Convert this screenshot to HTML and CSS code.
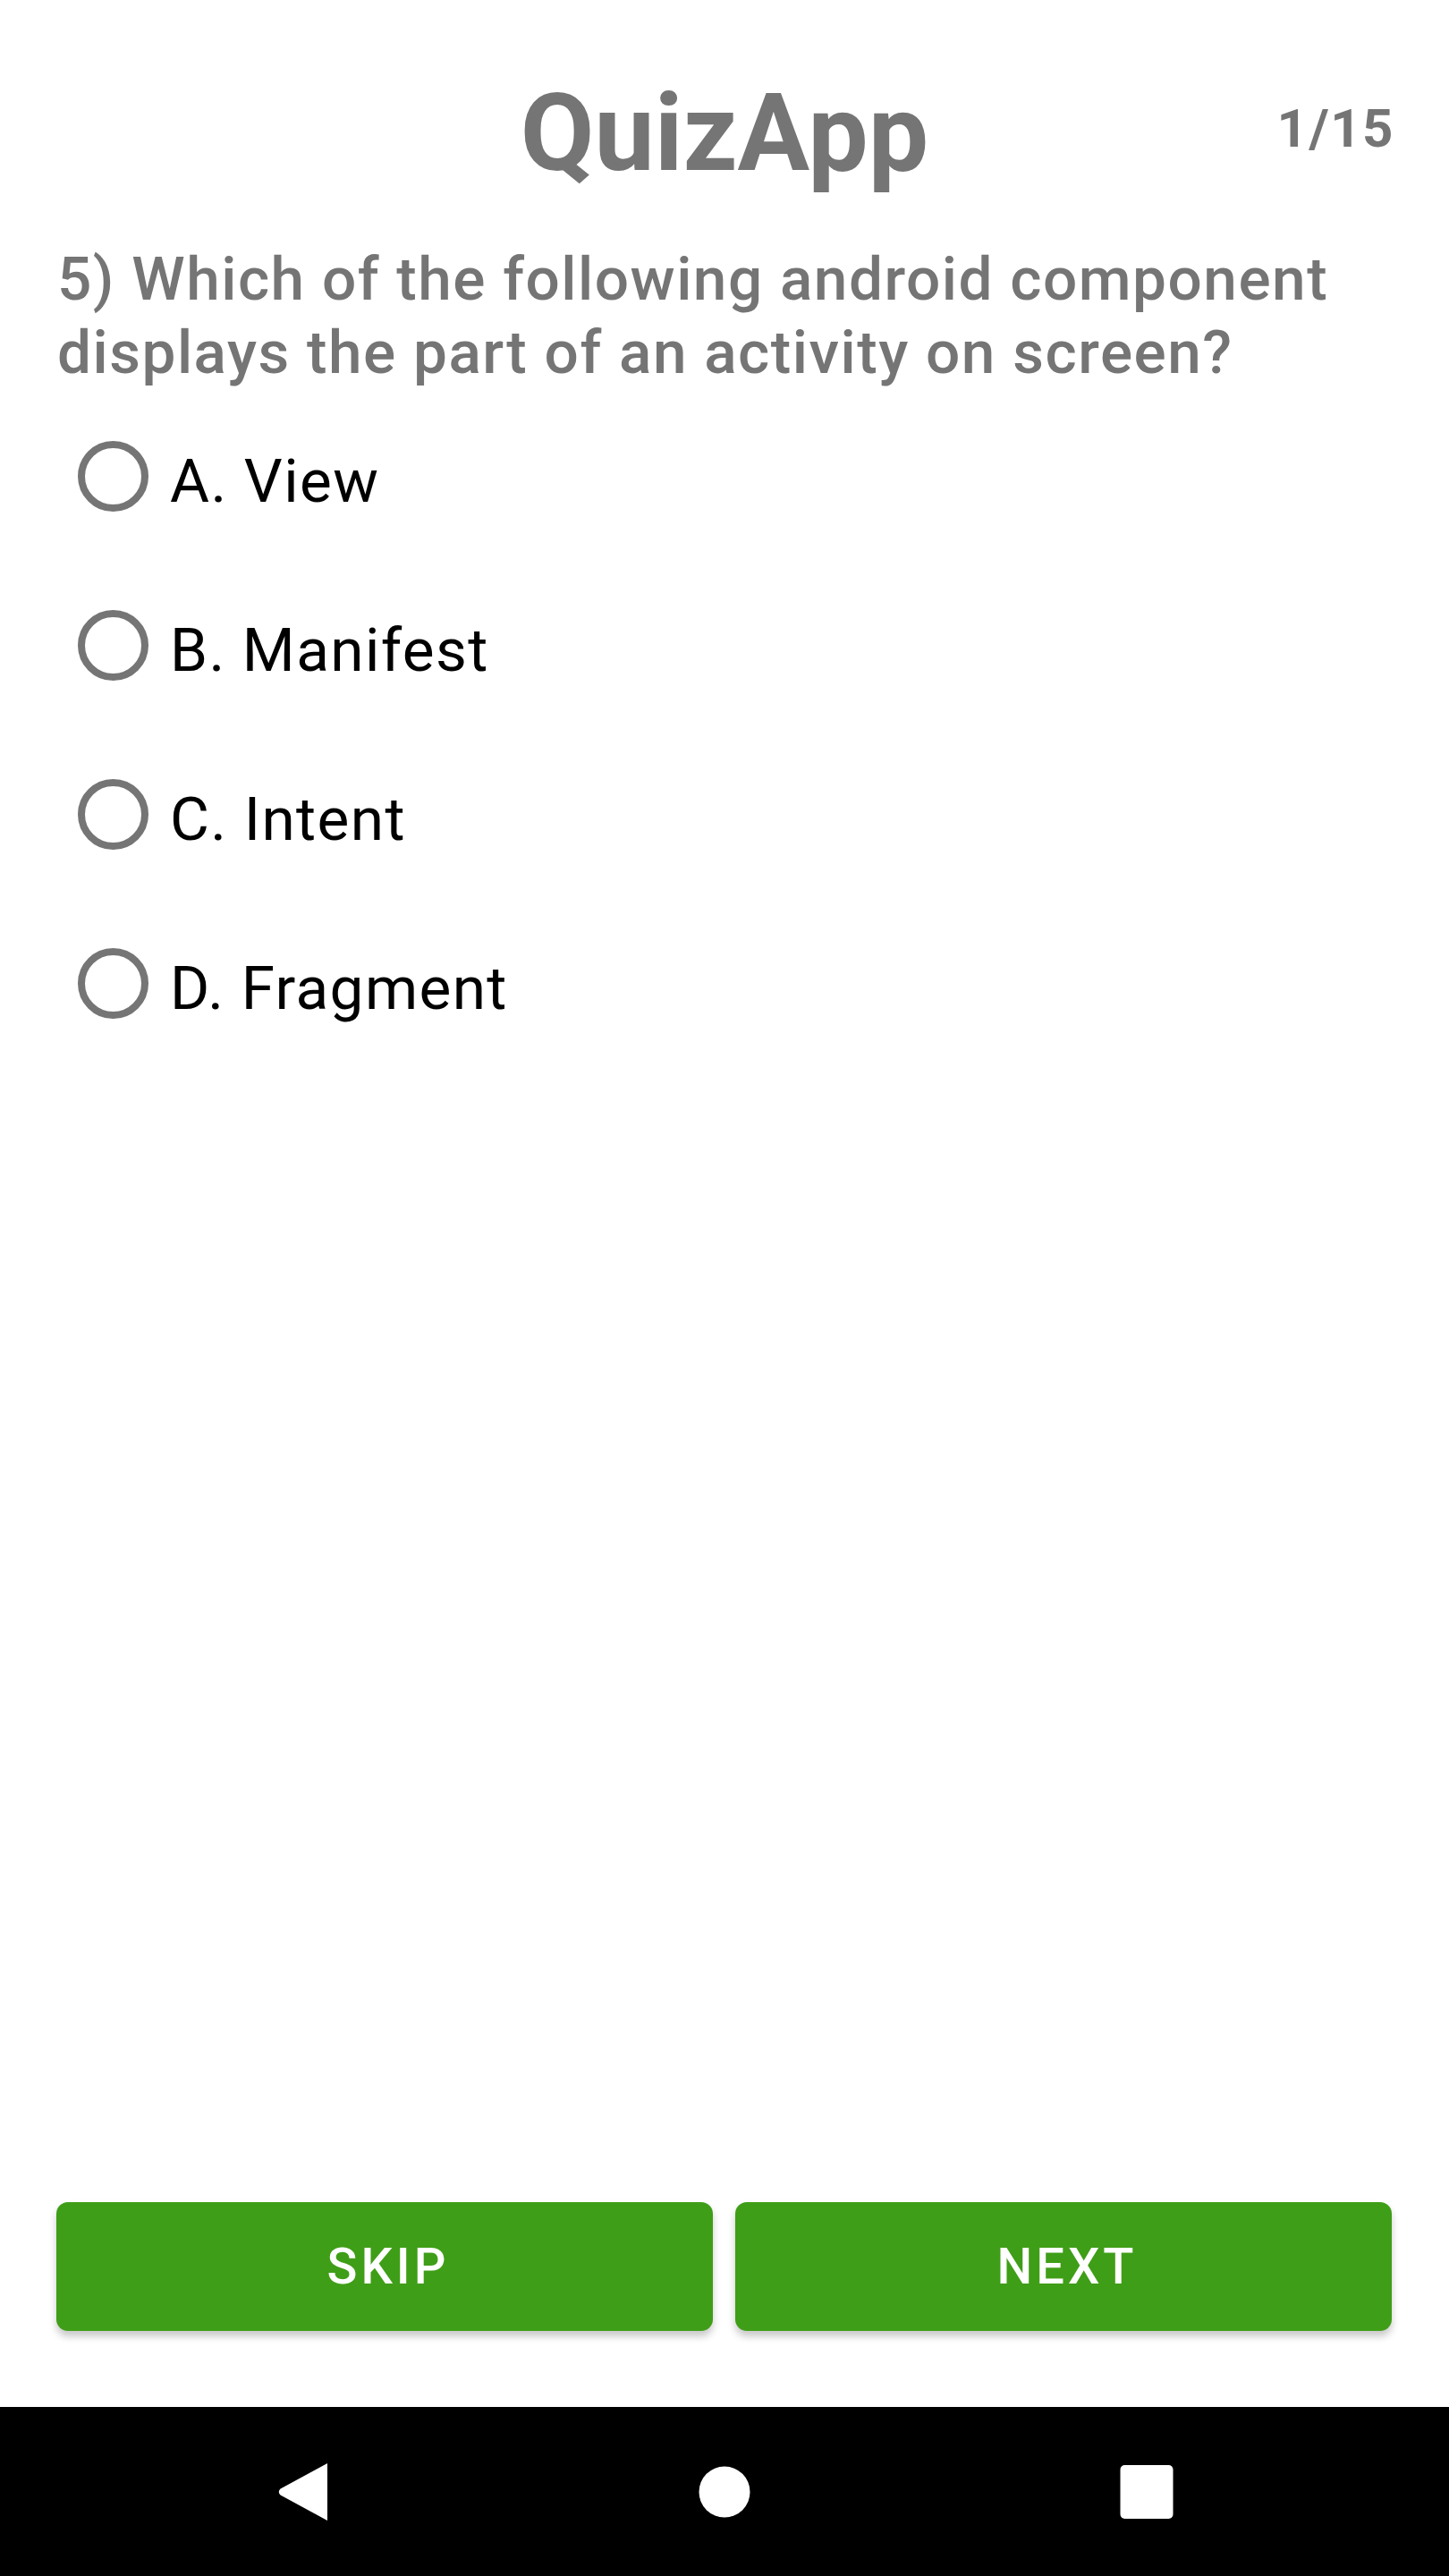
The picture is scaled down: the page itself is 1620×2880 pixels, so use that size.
FILE: index.html
```html
<!DOCTYPE html>
<html lang="en">
<head>
<meta charset="utf-8">
<title>QuizApp</title>
<link rel="stylesheet" href="styles.css">
</head>
<body>
<div class="screen">
  <main class="content">
    <header class="header">
      <span class="header-spacer"></span>
      <h1 class="title">QuizApp</h1>
      <span class="counter">1/15</span>
    </header>
    <p class="question">5) Which of the following android component displays the part of an activity on screen?</p>
    <div class="options">
      <label class="option"><span class="radio"></span><span class="option-text">A. View</span></label>
      <label class="option"><span class="radio"></span><span class="option-text">B. Manifest</span></label>
      <label class="option"><span class="radio"></span><span class="option-text">C. Intent</span></label>
      <label class="option"><span class="radio"></span><span class="option-text">D. Fragment</span></label>
    </div>
  </main>
  <footer class="actions">
    <button class="btn">SKIP</button>
    <button class="btn">NEXT</button>
  </footer>
  <nav class="navbar">
    <span class="nav-cell">
      <svg class="nav-back" width="56" height="64" viewBox="0 0 56 64"><path d="M56 0 L56 64 L3.5 35.5 Q0 32 3.5 28.5 Z" fill="#fff"/></svg>
    </span>
    <span class="nav-cell">
      <svg width="58" height="58" viewBox="0 0 58 58"><circle cx="29" cy="29" r="28.5" fill="#fff"/></svg>
    </span>
    <span class="nav-cell">
      <svg width="60" height="60" viewBox="0 0 60 60"><rect x="0.5" y="0" width="59" height="60" rx="5" fill="#fff"/></svg>
    </span>
  </nav>
</div>
</body>
</html>
```

FILE: styles.css
```css
* {
  box-sizing: border-box;
}

html, body {
  margin: 0;
  padding: 0;
  background: #ffffff;
}

body {
  font-family: Roboto, "Noto Sans", "Liberation Sans", sans-serif;
}

.screen {
  width: 1620px;
  height: 2880px;
  display: flex;
  flex-direction: column;
  background: #ffffff;
}

.content {
  flex: 1;
  padding: 79px 64px 0 64px;
}

.header {
  display: grid;
  grid-template-columns: 1fr auto 1fr;
  align-items: start;
}

.title {
  margin: 0;
  font-size: 120px;
  font-weight: 700;
  line-height: 141px;
  color: #757575;
  text-align: center;
}

.counter {
  justify-self: end;
  margin-top: 30px;
  margin-right: -3px;
  font-size: 60px;
  font-weight: 700;
  letter-spacing: 1.5px;
  line-height: 70px;
  color: #757575;
}

.question {
  margin: 51px 0 0 0;
  font-size: 67.5px;
  font-weight: 500;
  letter-spacing: 1.5px;
  line-height: 82px;
  color: #757575;
}

.options {
  margin-top: 3px;
  display: flex;
  flex-direction: column;
}

.option {
  height: 189px;
  display: flex;
  align-items: center;
  padding-left: 23px;
}

.radio {
  width: 79px;
  height: 79px;
  border: 8px solid #757575;
  border-radius: 50%;
  flex: none;
}

.option-text {
  margin-left: 24px;
  padding-top: 10px;
  font-size: 67.5px;
  font-weight: 400;
  letter-spacing: 1.4px;
  line-height: 79px;
  color: #000000;
}

.actions {
  display: flex;
  gap: 25px;
  padding: 0 64px 85px 63px;
}

.btn {
  flex: 1;
  height: 144px;
  border: none;
  border-radius: 13px;
  background: #3f9e17;
  color: #ffffff;
  font-family: Roboto, "Noto Sans", "Liberation Sans", sans-serif;
  font-size: 56px;
  font-weight: 500;
  letter-spacing: 4px;
  box-shadow: 0 6px 9px rgba(0, 0, 0, 0.22);
  padding: 0 0 0 8px;
}

.navbar {
  height: 189px;
  background: #000000;
  display: flex;
  justify-content: center;
  align-items: center;
  gap: 352px;
}

.nav-cell {
  width: 120px;
  height: 64px;
  display: flex;
  justify-content: center;
  align-items: center;
}

.nav-back {
  margin-right: 0;
}
```
